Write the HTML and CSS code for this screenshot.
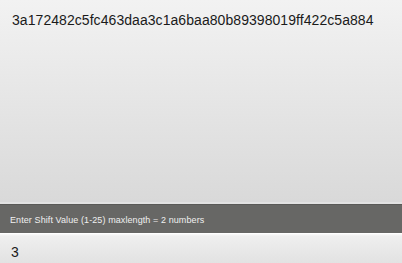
FILE: index.html
```html
<!DOCTYPE html>
<html>
<head>
<meta charset="utf-8">
<link rel="stylesheet" href="styles.css">
</head>
<body>
<div class="page">
  <div class="output">3a172482c5fc463daa3c1a6baa80b89398019ff422c5a884</div>
  <div class="label">Enter Shift Value (1-25) maxlength = 2 numbers</div>
  <div class="field"><input class="shift" type="text" maxlength="2" value="3"></div>
</div>
</body>
</html>
```
FILE: styles.css
```css
html, body {
  margin: 0;
  padding: 0;
  width: 402px;
  height: 263px;
  overflow: hidden;
  font-family: "Liberation Sans", Arial, sans-serif;
}
.page {
  display: flex;
  flex-direction: column;
  height: 263px;
}
.output {
  height: 204px;
  flex: none;
  box-sizing: border-box;
  padding: 12px 0 0 12px;
  font-size: 14px;
  letter-spacing: 0.06px;
  color: #1a1a1a;
  background: linear-gradient(#f2f2f2, #d9d9d9);
  border-bottom: 2px solid #e2e2e2;
}
.label {
  height: 29px;
  flex: none;
  box-sizing: border-box;
  padding: 10px 0 0 10px;
  background: #676765;
  color: #f0f0f0;
  font-size: 9px;
  letter-spacing: 0.09px;
  border-top: 1px solid #5a5a58;
}
.field {
  flex: 1;
  background: linear-gradient(#fafafa 0, #efefef 2px, #e2e2e2 100%);
  border-top: 1px solid #ffffff;
  display: flex;
}
.shift {
  border: 0;
  background: transparent;
  font-family: "Liberation Sans", Arial, sans-serif;
  font-size: 14px;
  color: #1a1a1a;
  padding: 7px 0 0 11px;
  margin: 0;
  width: 100%;
  outline: none;
}
```
